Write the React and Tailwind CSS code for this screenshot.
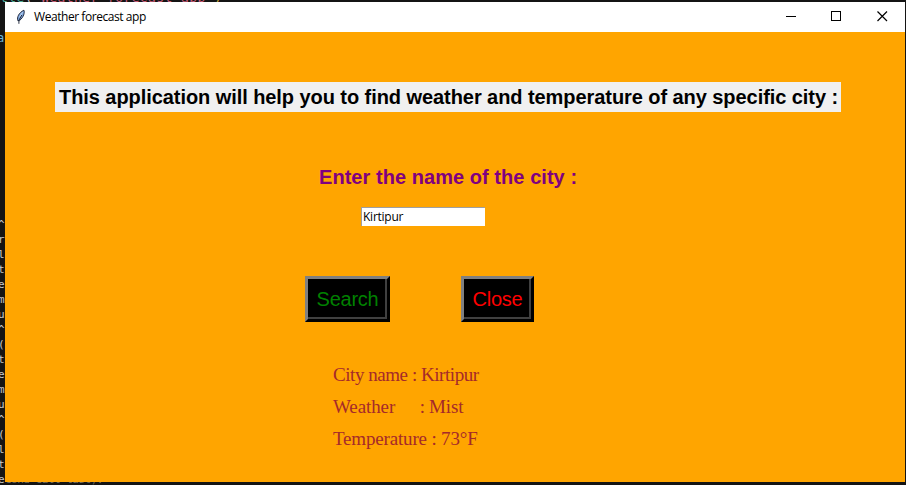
import React from "react";

const SANS = "font-['Liberation_Sans',Arial,sans-serif]";
const consoleChars = ["^", "r", "l", "t", "e", "m", "u", "^", "(", "t", "e", "m", "u", "^", "(", "l", "t", "e"];

function Editor() {
  return (
    <div className="absolute inset-0 overflow-hidden font-['DejaVu_Sans_Mono',monospace] text-[#c8c8c8]">
      <div className="absolute -top-[11px] left-0 flex whitespace-pre text-[13px] leading-[18px] tracking-[0.4px]">
        <span className="text-[#4fae9c]">tle</span>
        <span>(</span>
        <span className="text-[#c65b78]">"Weather forecast app"</span>
        <span className="text-[#c9a63c]">)</span>
      </div>
      <div className="absolute -left-[3px] top-[29px] text-[12px] leading-[18px] text-[#6cb4d8]">a</div>
      <div className="absolute -left-[2px] top-[217px] flex flex-col text-[11px]">
        {consoleChars.map((c, i) => (
          <span key={i} className="h-[15px] leading-[15px]">{c}</span>
        ))}
      </div>
      <div className="absolute left-[5px] top-[472px] whitespace-pre text-[11px] leading-[15px] tracking-[-0.5px] text-[#77705f]">cond call last).</div>
    </div>
  );
}

function Feather() {
  return (
    <svg className="h-4 w-4" viewBox="0 0 16 16" fill="none">
      <path d="M4.8 11.6C3.8 8.4 5.6 3.8 10.9 1.2c1 2.3-.1 6.8-4.4 10.4z" fill="#7fa6dc" stroke="#141c30" strokeWidth="0.9" />
      <path d="M9.6 3.2 6.6 8.2" stroke="#c7e0f7" strokeWidth="0.9" />
      <path d="M8.8 6 5.9 11.4v3.4" stroke="#141c30" strokeWidth="0.9" />
    </svg>
  );
}

function TitleBar() {
  return (
    <div className="flex h-[30px] items-center bg-white">
      <div className="ml-2 flex w-[21px]"><Feather /></div>
      <span className="whitespace-nowrap font-['Open_Sans',sans-serif] text-[12px] leading-[16px] tracking-[-0.44px] text-black">Weather forecast app</span>
      <svg className="ml-auto mr-[16px] h-[12px] w-[103px]" viewBox="0 0 103 12" fill="none" stroke="#000" shapeRendering="crispEdges">
        <path d="M0 5.5H10" />
        <path d="M45.5 0.5h9v9h-9z" />
        <path d="M91.5 0.5l9.5 9.5M101 0.5l-9.5 9.5" shapeRendering="auto" strokeWidth="1.2" />
      </svg>
    </div>
  );
}

function RaisedButton({ label, className }) {
  return (
    <button className={`flex h-[46px] flex-col border-[3px] border-t-[#808080] border-l-[#808080] border-r-black border-b-black bg-black ${className}`}>
      <span className={`flex h-[40px] w-full items-center justify-center border-r-2 border-b-2 border-[#404040] pl-[2px] pt-[2px] text-[20px] leading-[24px] tracking-[-0.25px] ${SANS}`}>{label}</span>
    </button>
  );
}

export default function App() {
  return (
    <div className="relative h-[485px] w-[906px] overflow-hidden bg-[#141414]">
      <Editor />
      <main className="absolute left-[5px] top-[2px] flex h-[480px] w-[900px] flex-col bg-[#ffa500]">
        <TitleBar />
        <h1 className={`ml-[50px] mt-[50px] flex h-[30px] w-[786px] shrink-0 items-center whitespace-nowrap bg-[#f0f0f0] pl-1 text-[20px] font-bold tracking-[-0.065px] text-black ${SANS}`}>
          This application will help you to find weather and temperature of any specific city :
        </h1>
        <h2 className={`ml-[314px] mt-[50px] flex h-[30px] items-center whitespace-nowrap text-[20px] font-bold tracking-[0.05px] text-[#800080] ${SANS}`}>
          Enter the name of the city :
        </h2>
        <input
          defaultValue="Kirtipur"
          className="ml-[356px] mt-[15px] h-[19px] w-[124px] shrink-0 border-t border-l border-[#a0a0a0] bg-white pb-px pl-px font-['Open_Sans',sans-serif] text-[12px] tracking-[-0.25px] text-black"
        />
        <div className="ml-[300px] mt-[50px] flex gap-[71px]">
          <RaisedButton label="Search" className="w-[85px] text-[#008000]" />
          <RaisedButton label="Close" className="w-[73px] text-[#ff0000]" />
        </div>
        <div className="ml-[328px] mt-[37px] flex flex-col whitespace-pre font-['Liberation_Serif','Times_New_Roman',serif] text-[19px] leading-[32px] text-[#a52a2a]">
          <span className="tracking-[-0.45px]">City name : Kirtipur</span>
          <span className="tracking-[-0.1px] [word-spacing:-0.55px]">{"Weather      : Mist"}</span>
          <span className="tracking-[-0.17px]">Temperature : 73°F</span>
        </div>
      </main>
    </div>
  );
}
